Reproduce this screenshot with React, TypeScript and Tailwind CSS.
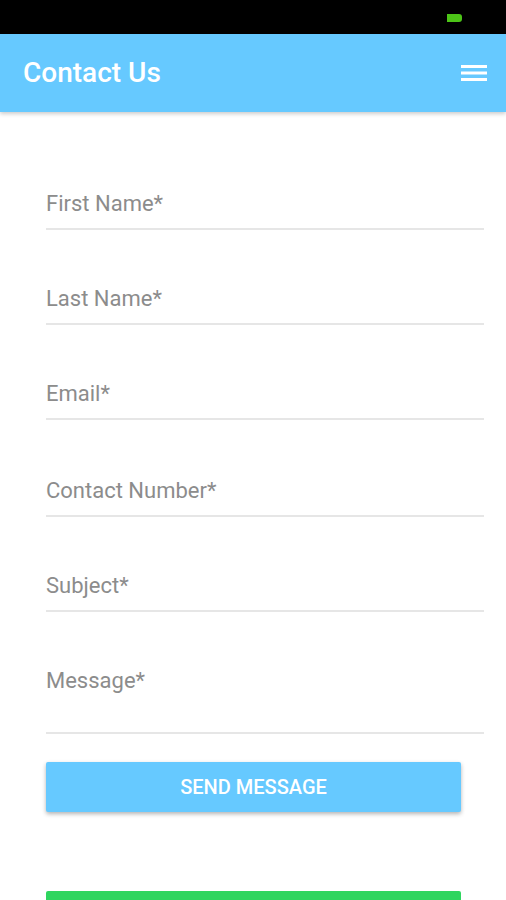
const fields = [
  { label: 'First Name*', gap: 'mt-0' },
  { label: 'Last Name*', gap: 'mt-[57px]' },
  { label: 'Email*', gap: 'mt-[57px]' },
  { label: 'Contact Number*', gap: 'mt-[59px]' },
  { label: 'Subject*', gap: 'mt-[57px]' },
]

function Hamburger() {
  return (
    <svg width="26" height="18" viewBox="0 0 26 18" fill="none">
      <rect x="0" y="1" width="26" height="3" fill="#fff" />
      <rect x="0" y="7.5" width="26" height="3" fill="#fff" />
      <rect x="0" y="14" width="26" height="3" fill="#fff" />
    </svg>
  )
}

export default function App() {
  return (
    <div className="w-[506px] h-[900px] overflow-hidden bg-white font-['Roboto',sans-serif]">
      <div className="h-[34px] bg-black flex items-center justify-end pr-[44px]">
        <div className="w-[15px] h-[8px] bg-[#4cc417] rounded-r-[3px] mt-[1px]" />
      </div>
      <header className="h-[78px] bg-[#66c9ff] flex items-center justify-between pl-[23px] pr-[19px] shadow-[0_2px_4px_rgba(0,0,0,0.2)] relative">
        <h1 className="text-[28px] font-medium text-white">Contact Us</h1>
        <Hamburger />
      </header>
      <form className="pl-[46px] pr-[22px] pt-[80px] flex flex-col">
        {fields.map((f) => (
          <div key={f.label} className={`${f.gap} border-b-2 border-[#e6e6e6] pb-[12px]`}>
            <span className="block text-[22px] leading-[24px] text-[#8c8c8c]">{f.label}</span>
          </div>
        ))}
        <div className="mt-[57px] border-b-2 border-[#e6e6e6] pb-[39px]">
          <span className="block text-[22px] leading-[24px] text-[#8c8c8c]">Message*</span>
        </div>
        <button
          type="button"
          className="mt-[28px] mr-[23px] h-[50px] bg-[#66c9ff] text-white text-[20px] font-medium rounded-[2px] shadow-[0_2px_4px_rgba(0,0,0,0.3)]"
        >
          SEND MESSAGE
        </button>
        <div className="mt-[79px] mr-[23px] h-[30px] bg-[#2fd55f] rounded-[2px]" />
      </form>
    </div>
  )
}
